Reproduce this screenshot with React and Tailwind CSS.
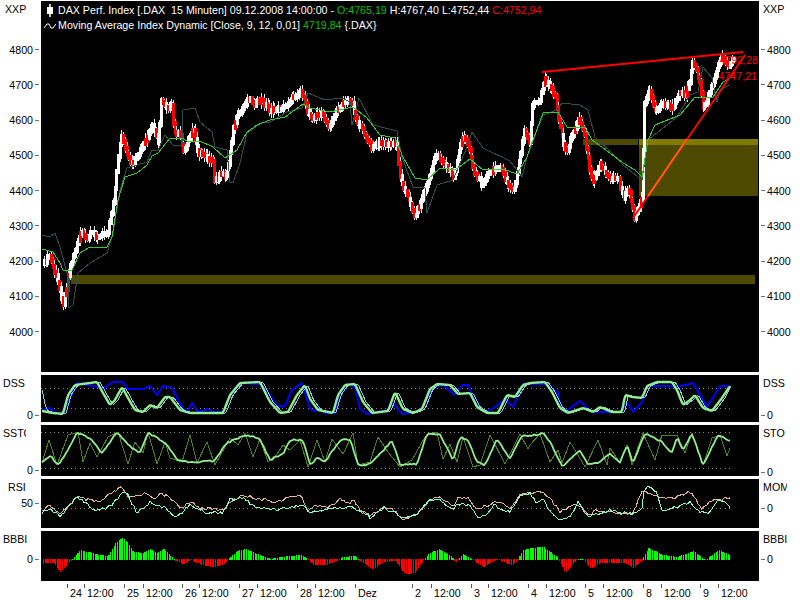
import React from 'react';

// chart data is in page pixels, each plot's viewBox starts at its own page offset
const PRICE = [[43,263],[48,255],[53,270],[60,293],[61,307],[65,290],[68,267],[73,253],[80,230],[85,240],[90,233],[98,237],[107,230],[112,200],[115,173],[120,133],[125,153],[130,165],[137,153],[147,137],[150,123],[157,143],[160,100],[167,110],[170,103],[173,133],[178,133],[183,153],[192,127],[197,153],[205,155],[212,163],[213,180],[222,173],[225,177],[233,123],[240,110],[247,97],[253,103],[260,100],[270,110],[283,107],[290,98],[300,90],[307,113],[313,117],[320,112],[327,127],[340,103],[350,100],[355,120],[363,133],[370,148],[378,142],[387,145],[395,142],[398,170],[403,190],[408,198],[413,217],[420,200],[427,180],[435,153],[443,163],[453,177],[458,147],[462,137],[467,143],[472,170],[480,183],[488,173],[498,165],[508,187],[513,190],[518,160],[523,130],[528,143],[532,100],[538,103],[543,77],[553,93],[560,133],[565,153],[570,137],[578,118],[583,133],[588,170],[592,180],[598,163],[608,177],[617,177],[622,197],[627,187],[633,217],[640,200],[642,137],[643,103],[648,88],[653,110],[663,103],[672,108],[678,90],[685,95],[692,60],[698,80],[702,110],[712,80],[720,57],[727,65],[733,58]];
const MA = [[42,249],[53,252],[60,263],[63,270],[72,270],[80,253],[88,248],[107,247],[112,237],[118,200],[125,177],[137,173],[147,165],[152,156],[158,153],[170,138],[182,138],[187,141],[200,141],[213,147],[225,158],[237,150],[247,132],[257,125],[270,120],[285,117],[303,104],[310,108],[330,112],[353,107],[367,118],[380,135],[395,138],[403,157],[415,178],[427,180],[440,168],[455,170],[470,159],[483,170],[503,169],[517,174],[527,157],[530,148],[543,113],[558,112],[567,127],[585,127],[592,140],[610,153],[623,163],[635,170],[642,177],[648,140],[655,125],[680,115],[690,103],[695,97],[713,97],[723,82],[730,78]];
const BAND = [[42,235],[50,237],[55,233],[60,247],[68,277],[68,308],[73,305],[78,273],[90,263],[107,253],[113,233],[120,190],[127,168],[147,162],[152,150],[158,150],[165,135],[173,145],[182,145],[183,110],[195,108],[200,122],[212,132],[215,147],[227,150],[230,182],[233,183],[240,163],[247,133],[263,122],[270,122],[287,112],[302,108],[308,93],[325,100],[342,98],[350,102],[352,125],[359,98],[373,125],[397,131],[402,157],[413,187],[425,188],[427,213],[437,185],[453,180],[467,147],[472,132],[483,148],[510,161],[522,177],[527,157],[543,115],[557,110],[562,103],[580,105],[588,110],[595,137],[612,153],[623,165],[642,180],[648,140],[677,117],[690,95],[698,92],[703,67],[712,78],[717,102],[720,90],[730,85]];

const DSS_SLOW = [[42,411],[53,413],[63,414],[68,395],[75,385],[97,382],[103,393],[110,405],[115,400],[122,387],[128,398],[135,410],[143,412],[150,405],[157,408],[165,397],[170,397],[180,410],[190,413],[223,413],[230,395],[240,383],[260,382],[270,402],[280,413],[288,412],[297,395],[305,385],[310,399],[318,410],[333,413],[338,395],[345,385],[355,384],[363,402],[372,413],[388,411],[395,392],[403,409],[413,413],[422,409],[430,389],[437,384],[450,385],[458,394],[470,393],[477,407],[487,413],[498,413],[507,395],[515,397],[523,385],[530,383],[545,382],[552,392],[560,408],[568,413],[583,408],[593,412],[600,407],[612,412],[622,412],[625,395],[633,397],[642,398],[647,386],[657,382],[672,382],[677,390],[683,405],[690,400],[695,395],[703,408],[712,411],[722,398],[730,386]];
const DSS_BLUE = [[42,410],[50,408],[55,413],[63,413],[77,383],[103,388],[113,382],[123,382],[128,389],[143,389],[150,386],[157,395],[163,386],[172,388],[182,407],[187,413],[192,403],[198,412],[208,409],[213,412],[223,412],[230,395],[240,383],[260,384],[270,395],[277,406],[285,406],[292,390],[302,383],[310,409],[315,411],[318,408],[325,413],[335,413],[340,395],[348,384],[355,387],[360,409],[367,414],[380,412],[388,410],[394,404],[402,414],[417,412],[423,407],[433,387],[443,385],[455,395],[462,385],[468,385],[472,395],[478,407],[487,412],[498,405],[505,399],[513,407],[523,384],[530,384],[547,384],[553,391],[558,392],[560,405],[565,412],[580,401],[587,408],[593,412],[620,412],[627,402],[633,412],[642,402],[647,386],[667,386],[677,387],[693,383],[700,395],[707,407],[720,386],[730,386]];
const DSS_THIN = [[42,388],[45,405],[48,411],...DSS_SLOW.slice(1).map(([x, y]) => [Math.min(x + 3, 731), y])];

const STO_SLOW = [[42,463],[50,455],[58,465],[65,455],[77,433],[90,438],[102,453],[117,432],[128,445],[140,453],[148,433],[157,438],[167,445],[177,460],[187,462],[197,463],[207,460],[213,462],[227,443],[245,435],[260,439],[270,460],[283,454],[290,440],[303,440],[310,465],[318,457],[325,462],[340,440],[350,439],[358,465],[368,465],[382,452],[392,440],[400,465],[417,464],[427,434],[440,434],[453,460],[460,437],[468,440],[477,462],[485,465],[497,439],[510,459],[522,435],[530,436],[543,433],[552,445],[562,467],[580,450],[588,465],[600,462],[610,453],[620,463],[627,445],[633,463],[645,433],[662,442],[672,453],[677,437],[683,450],[692,433],[703,465],[718,435],[730,441]];
const STO_FAST = [[42,463],[49,440],[57,465],[68,435],[78,432],[83,462],[90,443],[97,457],[108,437],[118,432],[128,464],[135,442],[143,453],[148,432],[157,464],[165,442],[170,458],[182,462],[190,435],[197,463],[207,442],[215,465],[230,438],[238,445],[245,433],[253,457],[260,439],[268,462],[277,454],[283,445],[290,450],[300,440],[308,467],[317,440],[325,462],[332,439],[343,454],[353,433],[358,465],[370,462],[378,437],[388,452],[400,467],[412,460],[425,437],[430,434],[437,432],[443,459],[450,444],[457,462],[463,437],[473,467],[480,465],[490,435],[505,464],[520,434],[528,449],[530,445],[540,434],[550,462],[558,450],[562,463],[570,442],[585,467],[598,440],[607,465],[610,448],[620,463],[627,445],[632,465],[643,433],[655,460],[662,435],[677,435],[685,453],[692,433],[703,465],[712,438],[720,435],[727,456],[730,448]];

const RSI_AQUA = [[42,513],[50,508],[60,517],[77,496],[93,510],[110,507],[125,490],[137,513],[150,502],[163,507],[177,517],[190,505],[207,513],[223,512],[230,500],[243,498],[257,508],[280,509],[303,505],[310,513],[327,509],[353,507],[370,517],[385,508],[397,514],[403,519],[417,514],[430,500],[440,500],[452,509],[460,504],[470,505],[477,517],[487,515],[493,505],[510,512],[520,495],[530,493],[537,503],[543,497],[547,507],[558,520],[570,517],[578,502],[588,517],[600,513],[610,510],[620,512],[630,515],[642,508],[643,493],[648,487],[657,492],[662,511],[673,508],[690,502],[700,512],[710,513],[718,498],[730,507]];
const RSI_TAN = [[42,510],[50,505],[60,515],[77,497],[87,500],[100,502],[112,493],[122,487],[128,498],[147,493],[157,500],[160,493],[170,498],[182,508],[192,502],[200,508],[223,510],[230,502],[243,495],[260,499],[277,502],[290,497],[300,495],[308,510],[317,505],[330,507],[340,499],[348,504],[353,499],[360,510],[370,515],[385,507],[393,509],[403,520],[417,514],[430,500],[440,497],[453,507],[458,497],[470,499],[477,510],[490,504],[500,502],[510,509],[520,495],[530,493],[543,492],[550,498],[560,512],[572,505],[580,505],[588,515],[597,510],[620,513],[633,513],[642,490],[658,497],[673,498],[690,492],[702,508],[712,500],[730,499]];

const BBBI = [[43,563],[53,562],[60,572],[67,563],[72,559],[80,550],[100,555],[108,556],[115,543],[122,538],[127,542],[133,552],[143,553],[150,549],[157,553],[163,549],[173,558],[175,560],[183,564],[190,559],[200,564],[213,567],[223,564],[228,559],[237,551],[245,549],[260,555],[270,559],[287,556],[302,555],[307,559],[313,564],[327,564],[338,560],[343,557],[355,556],[358,559],[372,569],[383,562],[395,560],[405,574],[415,572],[423,560],[427,555],[438,549],[452,557],[455,562],[463,554],[472,559],[483,567],[497,559],[512,565],[518,559],[523,550],[530,548],[543,547],[558,558],[565,572],[577,559],[583,559],[590,568],[600,563],[623,562],[633,568],[642,560],[648,548],[663,555],[677,557],[693,551],[702,558],[705,560],[718,550],[730,555]];

const TICKS = [
  [67,'24'],[84,'12:00'],[124,'25'],[143,'12:00'],[182,'26'],[199,'12:00'],[239,'27'],[257,'12:00'],[297,'28'],[315,'12:00'],[355,'Dez'],[412,'2'],[431,'12:00'],[471,'3'],[488,'12:00'],[528,'4'],[546,'12:00'],[585,'5'],[603,'12:00'],[643,'8'],[661,'12:00'],[700,'9'],[718,'12:00'],
];

const toPoints = (pts) => pts.map(([x, y]) => `${x},${y}`).join(' ');

const lerp = (pts, x) => {
  for (let i = 1; i < pts.length; i++) {
    if (x <= pts[i][0]) {
      const [x0, y0] = pts[i - 1];
      const [x1, y1] = pts[i];
      return x1 === x0 ? y1 : y0 + ((y1 - y0) * (x - x0)) / (x1 - x0);
    }
  }
  return pts[pts.length - 1][1];
};

const noise = (i) => {
  const v = Math.sin(i * 12.9898) * 43758.5453;
  return v - Math.floor(v);
};

// rounds off the corners of a keypoint line
const smooth = (pts, radius) => {
  const out = [];
  const start = pts[0][0];
  const end = pts[pts.length - 1][0];
  for (let x = start; x <= end; x += 1) {
    let sum = 0;
    let n = 0;
    for (let d = -radius; d <= radius; d++) {
      sum += lerp(pts, Math.min(end, Math.max(start, x + d)));
      n++;
    }
    out.push([x, sum / n]);
  }
  return out;
};

// adds the small bar to bar wobble of a real indicator
const wobble = (pts, amount, seed) => {
  const out = [];
  const end = pts[pts.length - 1][0];
  let i = seed;
  for (let x = pts[0][0]; x <= end; x += 2, i++) {
    out.push([x, lerp(pts, x) + (noise(i) - 0.5) * amount]);
  }
  return out;
};

const Candles = () => {
  const bars = [];
  let prev = lerp(PRICE, 43);
  let i = 0;
  for (let x = 43; x <= 733; x += 1.72, i++) {
    const c = lerp(PRICE, x) + (noise(i) - 0.5) * 4;
    const n = noise(i + 500);
    const up = n > 0.85 ? c > prev : c <= prev + 0.6;
    const top = Math.min(c, prev) - 2;
    const bottom = Math.max(c, prev) + 3;
    bars.push(
      <g key={i}>
        <rect x={x + 1} y={top - n * 5} width="1" height={bottom - top + n * 9} fill="#e8e8e8" />
        <rect x={x} y={top} width="3" height={bottom - top} fill={up ? '#ffffff' : '#ff0000'} />
      </g>
    );
    prev = c;
  }
  return <g shapeRendering="crispEdges">{bars}</g>;
};

const Histogram = () => {
  const bars = [];
  let i = 0;
  for (let x = 43; x <= 731; x += 1.72, i++) {
    const y = lerp(BBBI, x);
    bars.push(
      <rect
        key={i}
        x={x}
        y={Math.min(y, 559)}
        width="1.2"
        height={Math.abs(y - 559) + 0.5}
        fill={y > 559 ? '#ff0000' : '#00ff00'}
      />
    );
  }
  return <g shapeRendering="crispEdges">{bars}</g>;
};

const Dotted = ({ y }) => (
  <line x1="41" x2="732" y1={y} y2={y} stroke="#8a8a8a" strokeWidth="1" strokeDasharray="1 3.3" shapeRendering="crispEdges" />
);

const Line = ({ pts, color, width = 1 }) => (
  <polyline points={toPoints(pts)} fill="none" stroke={color} strokeWidth={width} strokeLinejoin="round" shapeRendering={width === 1 ? 'crispEdges' : undefined} />
);

// one side of an indicator panel: name near the top, value with a tick lower down
const PanelAxis = ({ name, nameTop, nameClass, value, gap, side }) => (
  <div className="w-[41px] shrink-0 flex flex-col leading-[12px]" style={{ paddingTop: nameTop }}>
    <div className={`h-[12px] whitespace-nowrap ${nameClass}`}>{name}</div>
    {side === 'left' ? (
      <div className="flex items-center justify-end gap-[2px] pr-[2px]" style={{ marginTop: gap }}>
        <span>{value}</span>
        <span className="w-[4px] h-px bg-gray-500" />
      </div>
    ) : (
      <div className="flex items-center gap-[2px] pl-[2px]" style={{ marginTop: gap }}>
        <span className="w-[4px] h-px bg-gray-500" />
        <span>{value}</span>
      </div>
    )}
  </div>
);

const PriceAxis = ({ side }) => (
  <div className="w-[41px] shrink-0 flex flex-col">
    <div className={`h-[31px] pt-[2px] leading-[12px] ${side === 'left' ? 'pl-[5px]' : 'pl-[4px]'}`}>XXP</div>
    {['4800', '4700', '4600', '4500', '4400', '4300', '4200', '4100', '4000'].map((v) =>
      side === 'left' ? (
        <div key={v} className="h-[35.25px] flex items-center justify-end gap-[2px] pr-[2px]">
          <span>{v}</span>
          <span className="w-[4px] h-px bg-gray-500" />
        </div>
      ) : (
        <div key={v} className="h-[35.25px] flex items-center gap-[2px] pl-[2px]">
          <span className="w-[4px] h-px bg-gray-500" />
          <span>{v}</span>
        </div>
      )
    )}
  </div>
);

const Plot = ({ top, height, children }) => (
  <div className="flex-1 bg-black">
    <svg width="718" height={height} viewBox={`41 ${top} 718 ${height}`} className="block">
      {children}
    </svg>
  </div>
);

const MainChart = () => (
  <Plot top={1} height={371}>
    <g shapeRendering="crispEdges">
      <rect x="583" y="139" width="55" height="6" fill="#4d4a00" />
      <rect x="639" y="139" width="119" height="6" fill="#807a00" />
      <rect x="639" y="145" width="119" height="51" fill="#4d4a00" />
      <rect x="71" y="275" width="684" height="9" fill="#4d4a00" />
    </g>
    <Candles />
    <Line pts={BAND} color="#2f4f4f" />
    <Line pts={MA} color="#32cd32" />
    <line x1="542" y1="72" x2="743" y2="52" stroke="#ff0000" strokeWidth="2" />
    <line x1="633" y1="218" x2="745" y2="55" stroke="#ff0000" strokeWidth="2" />
    <line x1="648" y1="196" x2="687" y2="139" stroke="#ff6000" strokeWidth="2" />
    <text x="758" y="64" textAnchor="end" fill="#ff0000" fontSize="10.67">4792,28</text>
    <text x="757" y="80" textAnchor="end" fill="#ff0000" fontSize="10.67">4747,21</text>
  </Plot>
);

const App = () => (
  <div className="w-[800px] h-[600px] bg-white text-black text-[10.67px] font-['Liberation_Sans',Arial,sans-serif] flex flex-col gap-[3px] pt-px overflow-hidden">
    <div className="flex h-[371px] relative">
      <PriceAxis side="left" />
      <MainChart />
      <PriceAxis side="right" />
      {/* legend sits over the chart */}
      <div className="absolute left-[44px] top-[2px] text-white leading-[15px] whitespace-nowrap">
        <div className="flex items-center gap-[2px]">
          <svg width="12" height="13" viewBox="0 0 12 13">
            <rect x="5" y="0" width="2" height="13" fill="#cccccc" />
            <rect x="3" y="3" width="6" height="7" fill="#ffffff" />
          </svg>
          <span>
            DAX Perf. Index [.DAX&nbsp; 15 Minuten] 09.12.2008 14:00:00 - <span className="text-[#00c000]">O:4765,19</span> H:4767,40 L:4752,44 <span className="text-[#ff0000]">C:4752,94</span>
          </span>
        </div>
        <div className="flex items-center gap-[2px]">
          <svg width="12" height="13" viewBox="0 0 12 13">
            <path d="M0 9 L3 5 L5 5 L7 9 L9 9 L12 5" fill="none" stroke="#ffffff" strokeWidth="1" />
          </svg>
          <span>
            Moving Average Index Dynamic [Close, 9, 12, 0,01] <span className="text-[#00c000]">4719,84</span> {'{.DAX}'}
          </span>
        </div>
      </div>
    </div>

    <div className="flex h-[47px]">
      <PanelAxis side="left" name="DSS" nameTop={2} nameClass="pl-[3px]" value="0" gap={20} />
      <Plot top={375} height={47}>
        <Dotted y={388} />
        <Dotted y={408} />
        <Line pts={DSS_BLUE} color="#0000ff" width={2} />
        <Line pts={smooth(DSS_THIN, 1)} color="#87ceeb" />
        <Line pts={smooth(DSS_SLOW, 1)} color="#90ee90" width={2.4} />
      </Plot>
      <PanelAxis side="right" name="DSS" nameTop={2} nameClass="pl-[4px]" value="0" gap={20} />
    </div>

    <div className="flex h-[51px]">
      <PanelAxis side="left" name="SSTO" nameTop={2} nameClass="pl-[3px] w-[26px] overflow-hidden" value="0" gap={27} />
      <Plot top={425} height={51}>
        <Dotted y={432} />
        <Dotted y={468} />
        <Line pts={STO_FAST} color="#4f7f1f" />
        <Line pts={wobble(smooth(STO_SLOW, 1), 1.5, 7)} color="#90ee90" width={1.8} />
      </Plot>
      <PanelAxis side="right" name="STO" nameTop={2} nameClass="pl-[4px]" value="0" gap={27} />
    </div>

    <div className="flex h-[49px]">
      <PanelAxis side="left" name="RSI" nameTop={2} nameClass="pl-[8px]" value="50" gap={4} />
      <Plot top={479} height={49}>
        <Dotted y={508} />
        <Line pts={wobble(RSI_TAN, 3, 40)} color="#deb887" />
        <Line pts={wobble(RSI_AQUA, 3, 90)} color="#7fffd4" />
      </Plot>
      <PanelAxis side="right" name="MOM" nameTop={2} nameClass="pl-[4px] w-[28px] overflow-hidden" value="0" gap={9} />
    </div>

    <div className="flex h-[50px]">
      <PanelAxis side="left" name="BBBI" nameTop={2} nameClass="pl-[3px]" value="0" gap={8} />
      <Plot top={531} height={50}>
        <Histogram />
      </Plot>
      <PanelAxis side="right" name="BBBI" nameTop={2} nameClass="pl-[4px]" value="0" gap={8} />
    </div>

    <svg width="800" height="16" viewBox="0 584 800 16" className="block">
      {TICKS.map(([x, label]) => (
        <g key={x}>
          <line x1={x} x2={x} y1="584" y2="588" stroke="#555555" shapeRendering="crispEdges" />
          <text x={x + 3} y="597" fontSize="10.67" fill="#000000">{label}</text>
        </g>
      ))}
    </svg>
  </div>
);

export default App;
